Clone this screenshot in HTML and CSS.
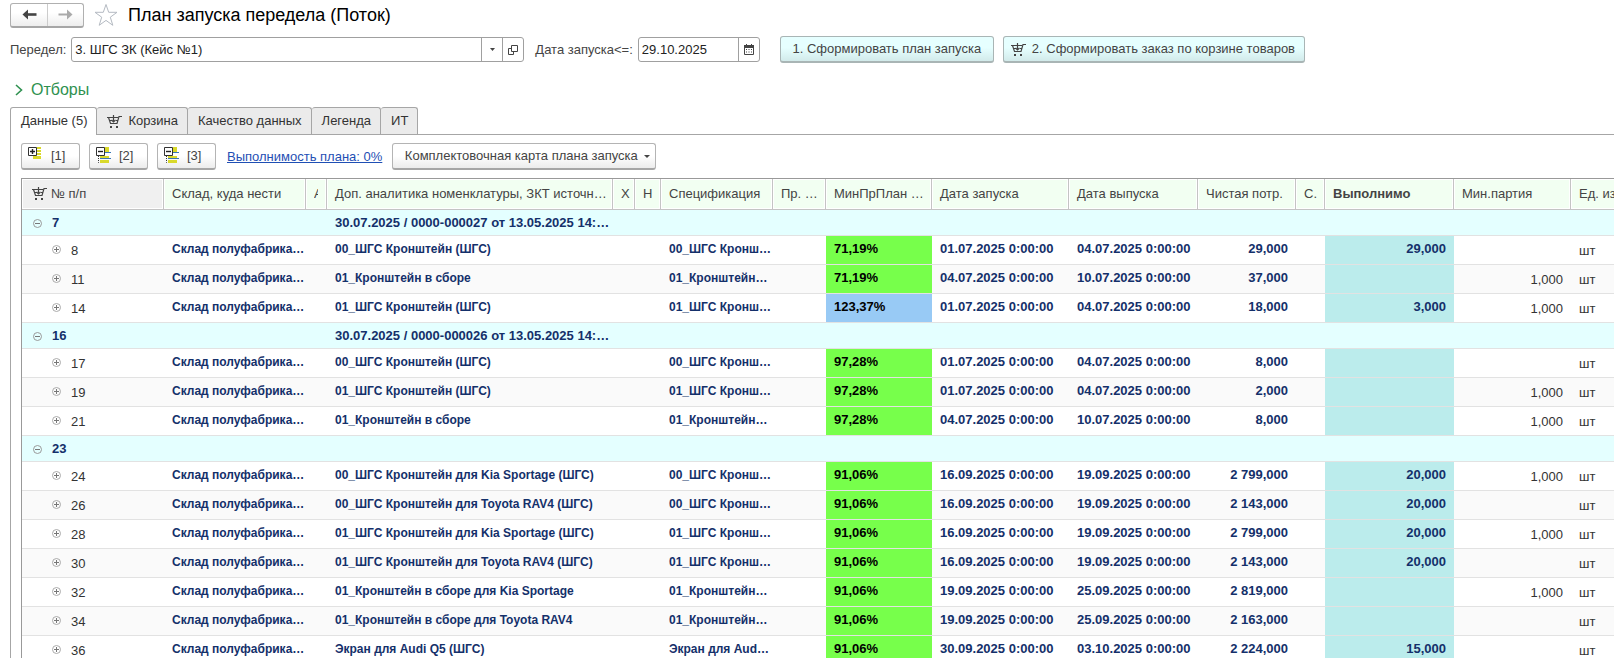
FILE: index.html
```
<!DOCTYPE html>
<html lang="ru">
<head>
  <meta charset="UTF-8" />
  <meta name="viewport" content="width=device-width, initial-scale=1.0"/>
  <title>План запуска передела (Поток)</title>
  <link rel="stylesheet" href="styles.css">
</head>
<body>
  <svg class="sprite" aria-hidden="true">
    <symbol id="cart" viewBox="0 0 15 13">
      <path d="M0 2.5H11M1.5 2.5L3.5 8.5H10L12 1.5H15M3 5.5H4.5M9 5.5H10.5M6.5 0V7M4.5 5L6.5 7L8.5 5" fill="none" stroke="#444" stroke-width="1.2"/>
      <path d="M3 11H5V13H3ZM9 11H11V13H9Z" fill="#444"/>
    </symbol>
    <symbol id="collapse" viewBox="0 0 16 16">
      <path d="M9 0H13V5H9ZM4 9H13V11H4ZM4 13H13V16H4Z" fill="#d9d92b"/>
      <path d="M9 5.5H15M4 11.5H15" stroke="#3a78b5"/>
      <path d="M2.5 9V15.5H4" fill="none" stroke="#333" stroke-dasharray="1 1"/>
      <path d="M0.5 0.5H8.5V8.5H0.5Z" fill="#fff" stroke="#333"/>
      <path d="M2 4.5H7" stroke="#222" stroke-width="1.4"/>
    </symbol>
    <symbol id="minus" viewBox="0 0 9 9"><circle cx="4.5" cy="4.5" r="4" fill="none" stroke="#999"/><path d="M2 4.5H7" stroke="#777"/></symbol>
    <symbol id="plus" viewBox="0 0 9 9"><circle cx="4.5" cy="4.5" r="4" fill="none" stroke="#aaa"/><path d="M2 4.5H7M4.5 2V7" stroke="#777"/></symbol>
  </svg>

  <header class="titlebar">
    <div class="nav">
      <button class="nav-btn" aria-label="Назад">
        <svg width="15" height="11" viewBox="0 0 15 11"><path d="M14.5 5.5H3" fill="none" stroke="#444" stroke-width="2.6"/><path d="M0.5 5.5L6 0.5V10.5Z" fill="#444"/></svg>
      </button>
      <button class="nav-btn" aria-label="Вперед">
        <svg width="15" height="11" viewBox="0 0 15 11"><path d="M0.5 5.5H12" fill="none" stroke="#aaa" stroke-width="2"/><path d="M14.5 5.5L9 0.5V10.5Z" fill="#aaa"/></svg>
      </button>
    </div>
    <button class="star" aria-label="Избранное">
      <svg width="24" height="24" viewBox="0 0 24 24"><path d="M12 1.5L14.7 9.3H23L16.3 14.2L18.8 22.3L12 17.4L5.2 22.3L7.7 14.2L1 9.3H9.3Z" fill="#fff" stroke="#b4bac2"/></svg>
    </button>
    <h1>План запуска передела (Поток)</h1>
  </header>

  <form class="params" onsubmit="return false">
    <label for="stage">Передел:</label>
    <div class="field field-stage">
      <input id="stage" type="text" value="3. ШГС ЗК (Кейс №1)">
      <button class="field-btn" aria-label="Выбрать из списка"><svg width="5" height="3" viewBox="0 0 5 3"><path d="M0 0H5L2.5 3Z" fill="#444"/></svg></button>
      <button class="field-btn" aria-label="Открыть"><svg width="10" height="10" viewBox="0 0 10 10"><path d="M3.5 0.5H9.5V6.5H3.5ZM3.5 3.5H0.5V9.5H5.5V6.5" fill="none" stroke="#444"/></svg></button>
    </div>
    <label for="date" class="label-date">Дата запуска&lt;=:</label>
    <div class="field field-date">
      <input id="date" type="text" value="29.10.2025">
      <button class="field-btn" aria-label="Календарь"><svg width="10" height="11" viewBox="0 0 10 11"><path d="M0.5 2V10.5H9.5V2" fill="none" stroke="#444"/><path d="M0 1H2V0H3V1H7V0H8V1H10V4H0ZM2 5H3V6H2ZM4.5 5H5.5V6H4.5ZM7 5H8V6H7ZM2 7.5H3V8.5H2ZM4.5 7.5H5.5V8.5H4.5ZM7 7.5H8V8.5H7Z" fill="#444"/></svg></button>
    </div>
    <button class="btn btn-cyan btn-plan">1. Сформировать план запуска</button>
    <button class="btn btn-cyan btn-order"><svg class="cart"><use href="#cart"/></svg>2. Сформировать заказ по корзине товаров</button>
  </form>

  <button class="filters"><svg width="8" height="12" viewBox="0 0 8 12"><path d="M1 1L6.5 6L1 11" fill="none" stroke="#2f9150" stroke-width="1.6"/></svg>Отборы</button>

  <div class="tabs" role="tablist">
    <button class="tab active" role="tab">Данные (5)</button>
    <button class="tab" role="tab"><svg class="cart"><use href="#cart"/></svg>Корзина</button>
    <button class="tab" role="tab">Качество данных</button>
    <button class="tab" role="tab">Легенда</button>
    <button class="tab" role="tab">ИТ</button>
  </div>

  <main class="panel">
    <div class="toolbar">
      <button class="btn btn-level"><svg width="16" height="16" viewBox="0 0 16 16"><path d="M9 0H13V2H9ZM9 3H13V5H9ZM9 6H13V8H9ZM5 9H13V12H5Z" fill="#d9d92b"/><path d="M0.5 0.5H8.5V8.5H0.5Z" fill="#fff" stroke="#333"/><path d="M2 4.5H7M4.5 2V7" stroke="#222" stroke-width="1.4"/></svg>[1]</button>
      <button class="btn btn-level"><svg width="16" height="16"><use href="#collapse"/></svg>[2]</button>
      <button class="btn btn-level"><svg width="16" height="16"><use href="#collapse"/></svg>[3]</button>
      <a href="#" class="link">Выполнимость плана: 0%</a>
      <button class="btn btn-card">Комплектовочная карта плана запуска<svg width="6" height="3" viewBox="0 0 6 3"><path d="M0 0H6L3 3Z" fill="#444"/></svg></button>
    </div>

    <div class="grid">
      <table>
        <colgroup>
          <col class="c-num"><col class="c-store"><col class="c-a"><col class="c-item"><col class="c-x"><col class="c-n"><col class="c-spec"><col class="c-pr">
          <col class="c-min"><col class="c-start"><col class="c-end"><col class="c-need"><col class="c-s"><col class="c-done"><col class="c-batch"><col class="c-unit">
        </colgroup>
        <thead>
          <tr>
            <th class="first"><svg class="cart"><use href="#cart"/></svg>№ п/п</th>
            <th>Склад, куда нести</th>
            <th><span class="clip">А</span></th>
            <th>Доп. аналитика номенклатуры, ЗКТ источн…</th>
            <th>Х</th>
            <th>Н</th>
            <th>Спецификация</th>
            <th>Пр. …</th>
            <th>МинПрПлан …</th>
            <th>Дата запуска</th>
            <th>Дата выпуска</th>
            <th>Чистая потр.</th>
            <th>С.</th>
            <th class="strong">Выполнимо</th>
            <th>Мин.партия</th>
            <th>Ед. изм.</th>
          </tr>
        </thead>
        <tbody id="rows"></tbody>
      </table>
    </div>
  </main>

  <script>
    const brk = "00_ШГС Кронш…";
    const brk1 = "01_ШГС Кронш…";
    const asm = "01_Кронштейн…";

    // group: [number, title]
    // row: [number, item, spec, percent, start, end, need, done, batch]
    const data = [
      ["7", "30.07.2025 / 0000-000027 от 13.05.2025 14:…"],
      ["8", "00_ШГС Кронштейн (ШГС)", brk, "71,19%", "01.07.2025", "04.07.2025", "29,000", "29,000", ""],
      ["11", "01_Кронштейн в сборе", asm, "71,19%", "04.07.2025", "10.07.2025", "37,000", "", "1,000"],
      ["14", "01_ШГС Кронштейн (ШГС)", brk1, "123,37%", "01.07.2025", "04.07.2025", "18,000", "3,000", "1,000"],
      ["16", "30.07.2025 / 0000-000026 от 13.05.2025 14:…"],
      ["17", "00_ШГС Кронштейн (ШГС)", brk, "97,28%", "01.07.2025", "04.07.2025", "8,000", "", ""],
      ["19", "01_ШГС Кронштейн (ШГС)", brk1, "97,28%", "01.07.2025", "04.07.2025", "2,000", "", "1,000"],
      ["21", "01_Кронштейн в сборе", asm, "97,28%", "04.07.2025", "10.07.2025", "8,000", "", "1,000"],
      ["23", ""],
      ["24", "00_ШГС Кронштейн для Kia Sportage (ШГС)", brk, "91,06%", "16.09.2025", "19.09.2025", "2 799,000", "20,000", "1,000"],
      ["26", "00_ШГС Кронштейн для Toyota RAV4 (ШГС)", brk, "91,06%", "16.09.2025", "19.09.2025", "2 143,000", "20,000", ""],
      ["28", "01_ШГС Кронштейн для Kia Sportage (ШГС)", brk1, "91,06%", "16.09.2025", "19.09.2025", "2 799,000", "20,000", "1,000"],
      ["30", "01_ШГС Кронштейн для Toyota RAV4 (ШГС)", brk1, "91,06%", "16.09.2025", "19.09.2025", "2 143,000", "20,000", ""],
      ["32", "01_Кронштейн в сборе для Kia Sportage", asm, "91,06%", "19.09.2025", "25.09.2025", "2 819,000", "", "1,000"],
      ["34", "01_Кронштейн в сборе для Toyota RAV4", asm, "91,06%", "19.09.2025", "25.09.2025", "2 163,000", "", ""],
      ["36", "Экран для Audi Q5 (ШГС)", "Экран для Aud…", "91,06%", "30.09.2025", "03.10.2025", "2 224,000", "15,000", ""]
    ];

    function toggle(icon, label) {
      return `<button class="toggle" aria-label="${label}"><svg><use href="#${icon}"/></svg></button>`;
    }

    function groupRow([num, title]) {
      return `<tr class="group"><td>${toggle("minus", "Свернуть")}${num}</td><td></td><td></td><td>${title}</td><td colspan="12"></td></tr>`;
    }

    function itemRow([num, item, spec, percent, start, end, need, done, batch]) {
      const over = parseFloat(percent) > 100 ? " over" : "";
      return `<tr class="item">
        <td class="plain">${toggle("plus", "Развернуть")}${num}</td>
        <td class="name">Склад полуфабрика…</td><td></td>
        <td class="name">${item}</td><td></td><td></td>
        <td class="name">${spec}</td><td></td>
        <td class="percent${over}">${percent}</td>
        <td>${start} 0:00:00</td>
        <td>${end} 0:00:00</td>
        <td class="num">${need}</td><td></td>
        <td class="num done">${done}</td>
        <td class="num plain">${batch}</td>
        <td class="plain">шт</td>
      </tr>`;
    }

    document.getElementById("rows").innerHTML = data.map(r => r.length === 2 ? groupRow(r) : itemRow(r)).join("");
  </script>
</body>
</html>
```
FILE: styles.css
```
* {
  box-sizing: border-box;
}

html, body {
  height: 100%;
}

body {
  margin: 0;
  display: flex;
  flex-direction: column;
  overflow: hidden;
  background: #fff;
  color: #444;
  font-family: "Liberation Sans", Arial, sans-serif;
  font-size: 13px;
  line-height: 16px;
}

button, input {
  font: inherit;
  color: inherit;
}

button {
  padding: 0;
  border: none;
  background: none;
  cursor: pointer;
  white-space: nowrap;
}

svg {
  display: block;
  flex: none;
}

.sprite {
  position: absolute;
  width: 0;
  height: 0;
}

.cart {
  width: 15px;
  height: 13px;
}

/* title */
.titlebar {
  display: flex;
  align-items: center;
  height: 28px;
  padding: 2px 10px 0;
}

.nav {
  display: flex;
  height: 25px;
  border: 1px solid #b0b0b0;
  border-bottom: 2px solid #a6a6a6;
  border-radius: 3px;
  background: linear-gradient(#fff 40%, #ededed);
}

.nav-btn {
  display: flex;
  align-items: center;
  justify-content: center;
  width: 36px;
}

.nav-btn + .nav-btn {
  border-left: 1px solid #ccc;
}

.star {
  margin: 0 10px;
}

h1 {
  margin: 0;
  color: #000;
  font-size: 18px;
  font-weight: normal;
  line-height: 24px;
}

/* parameters */
.params {
  display: flex;
  align-items: center;
  height: 42px;
  padding: 1px 10px 0;
}

.field {
  display: flex;
  height: 25px;
  margin-left: 5px;
  border: 1px solid #a0a0a0;
  border-radius: 3px;
}

.field-stage {
  width: 453px;
}

.field-date {
  width: 122px;
}

.field input {
  flex: 1;
  min-width: 0;
  padding: 0 3px;
  border: none;
  outline: none;
  background: none;
  color: #222;
}

.field-btn {
  display: flex;
  align-items: center;
  justify-content: center;
  width: 21px;
  border-left: 1px solid #a0a0a0;
}

.label-date {
  margin-left: 11px;
}

.btn {
  display: flex;
  align-items: center;
  justify-content: center;
  height: 27px;
  border: 1px solid #b4b4b4;
  border-bottom: 2px solid #a6a6a6;
  border-radius: 3px;
  background: linear-gradient(#fff 50%, #ececec);
}

.btn-cyan {
  border-color: #a9b5b5;
  background: linear-gradient(#e6ffff 45%, #d2eaea);
}

.btn-plan {
  width: 214px;
  margin-left: 20px;
}

.btn-order {
  justify-content: flex-start;
  gap: 6px;
  width: 302px;
  margin-left: 9px;
  padding-left: 7px;
}

.filters {
  display: flex;
  align-items: center;
  align-self: flex-start;
  gap: 8px;
  height: 37px;
  padding: 2px 0 0 15px;
  color: #2f9150;
  font-size: 16px;
}

/* tabs */
.tabs {
  display: flex;
  margin-left: 10px;
  border-bottom: 1px solid #a6a6a6;
}

.tab {
  display: flex;
  align-items: center;
  gap: 6px;
  height: 27px;
  padding: 0 9px 0 10px;
  border: 1px solid #a6a6a6;
  border-bottom: none;
  border-left-width: 0;
  border-radius: 3px 3px 0 0;
  background: #ebebeb;
  color: #333;
}

.tab.active {
  height: 28px;
  margin-bottom: -1px;
  padding-bottom: 1px;
  border-left-width: 1px;
  background: #fff;
}

.panel {
  flex: 1;
  min-height: 0;
  display: flex;
  flex-direction: column;
  margin-left: 10px;
  padding: 8px 0 0 10px;
  border-left: 1px solid #a6a6a6;
}

.toolbar {
  display: flex;
  align-items: center;
  gap: 9px;
  margin-bottom: 8px;
}

.btn-level {
  justify-content: flex-start;
  gap: 7px;
  width: 59px;
  padding-left: 6px;
}

.btn-level svg {
  margin-bottom: 2px;
}

.btn-card {
  gap: 6px;
  width: 264px;
  padding-left: 6px;
}

.link {
  margin: 0 1px 0 2px;
  color: #1f4fb4;
}

/* data grid */
.grid {
  flex: 1;
  min-height: 0;
  overflow: hidden;
  border-top: 1px solid #999;
  border-left: 1px solid #999;
}

table {
  width: 1640px;
  border-collapse: separate;
  border-spacing: 0;
  table-layout: fixed;
}

.c-num, .c-store { width: 142px; }
.c-a { width: 21px; }
.c-item { width: 286px; }
.c-x { width: 22px; }
.c-n { width: 26px; }
.c-spec { width: 112px; }
.c-pr { width: 53px; }
.c-min { width: 106px; }
.c-start { width: 137px; }
.c-end, .c-done { width: 129px; }
.c-need { width: 98px; }
.c-s { width: 29px; }
.c-batch { width: 117px; }

th, td {
  padding: 0 8px;
  text-align: left;
  white-space: nowrap;
}

th {
  height: 31px;
  border-right: 1px solid #c4c4c4;
  border-bottom: 1px solid #c4c4c4;
  background: #f2fff2;
  box-shadow: inset 0 0 0 1px #fff;
  font-weight: normal;
}

th.first {
  background: #f0f0f0;
}

th.strong {
  font-weight: bold;
}

.clip {
  display: block;
  overflow: hidden;
}

.first .cart {
  display: inline-block;
  margin: 0 4px 0 2px;
  vertical-align: -2px;
}

td {
  height: 29px;
  padding-bottom: 3px;
  border-bottom: 1px solid #e2e2e2;
  color: #14306a;
  font-weight: bold;
}

td.name {
  font-size: 12px;
}

tr:nth-child(odd) td {
  background: #fafafa;
}

tr.group td {
  height: 26px;
  padding-bottom: 0;
  background: #e4ffff;
}

td.plain {
  padding-top: 1px;
  padding-bottom: 0;
  color: #333;
  font-weight: normal;
}

.toggle {
  margin: 0 10px 0 3px;
  vertical-align: -1px;
}

.item .toggle {
  margin-left: 22px;
  vertical-align: 1px;
}

.toggle svg {
  width: 9px;
  height: 9px;
}

td.num {
  text-align: right;
}

tr.item td.percent {
  background: #77ff4b;
  color: #000;
}

tr.item td.over {
  background: #98caf5;
}

tr.item td.done {
  background: #bbecec;
}
```
